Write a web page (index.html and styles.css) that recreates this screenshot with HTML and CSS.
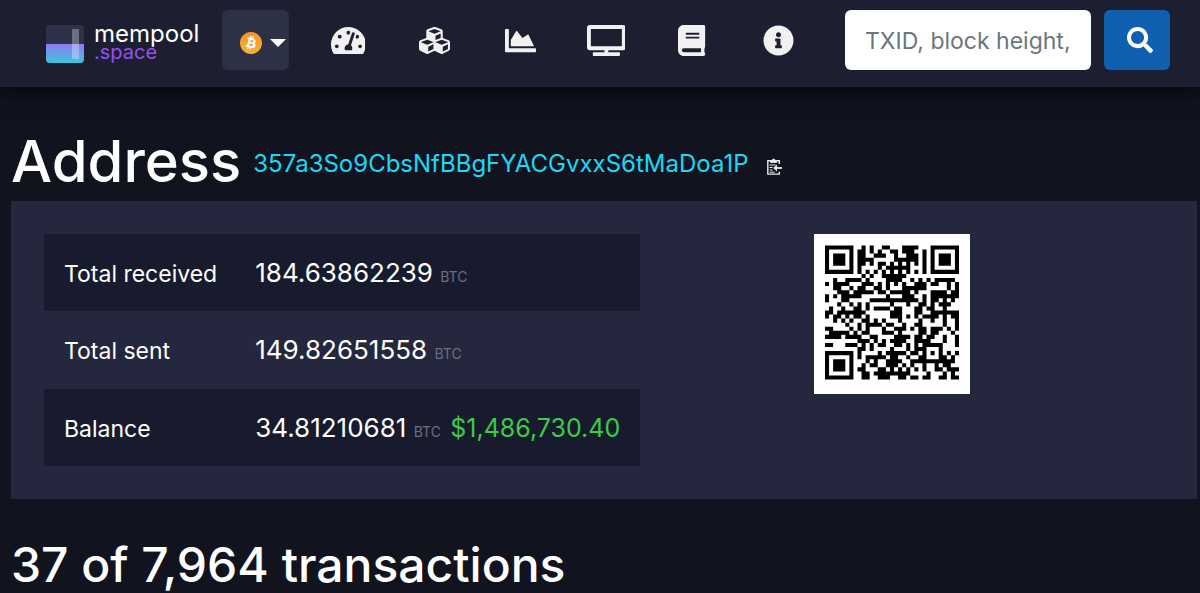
FILE: index.html
```html
<!DOCTYPE html>
<html lang="en">
<head>
<meta charset="utf-8">
<meta name="viewport" content="width=device-width, initial-scale=1">
<title>mempool.space - Address</title>
<link rel="stylesheet" href="styles.css">
</head>
<body>
<header class="topbar">
  <a class="brand" href="#" aria-label="mempool.space">
    <svg class="brand-mark" viewBox="0 0 38 38" aria-hidden="true">
      <defs>
        <linearGradient id="fill" x1="0" y1="0" x2="0" y2="1"><stop offset="0" stop-color="#8d7cf4"/><stop offset="1" stop-color="#3fc4dc"/></linearGradient>
        <clipPath id="round"><rect width="38" height="38" rx="4"/></clipPath>
      </defs>
      <g clip-path="url(#round)">
        <rect width="38" height="38" fill="#2e3249"/>
        <rect y="19" width="38" height="19" fill="url(#fill)"/>
        <rect x="26" y="4" width="7" height="30" rx="1" fill="#fff" opacity=".3"/>
      </g>
    </svg>
    <span class="brand-text"><span class="brand-name">mempool</span><span class="brand-suffix">.space</span></span>
  </a>
  <button class="network" type="button" aria-label="Network">
    <svg class="coin" viewBox="8 8 496 496" aria-hidden="true"><defs><linearGradient id="gold" x1="0" y1="0" x2="0" y2="1"><stop offset="0" stop-color="#f7932a"/><stop offset="1" stop-color="#f9b233"/></linearGradient></defs><circle cx="256" cy="256" r="230" fill="#fff"/><path fill="url(#gold)" d="M504 256c0 136.967-111.033 248-248 248S8 392.967 8 256 119.033 8 256 8s248 111.033 248 248zm-141.651-35.33c4.937-32.999-20.191-50.739-54.55-62.573l11.146-44.702-27.213-6.781-10.851 43.524c-7.154-1.783-14.502-3.464-21.803-5.13l10.929-43.81-27.198-6.781-11.153 44.686c-5.922-1.349-11.735-2.682-17.377-4.084l.031-.14-37.53-9.37-7.239 29.062s20.191 4.627 19.765 4.913c11.022 2.751 13.014 10.044 12.68 15.825l-12.696 50.925c.76.194 1.744.473 2.829.907-.907-.225-1.876-.473-2.876-.713l-17.796 71.338c-1.349 3.348-4.767 8.37-12.471 6.464.271.395-19.78-4.937-19.78-4.937l-13.51 31.147 35.414 8.827c6.588 1.651 13.045 3.379 19.4 5.006l-11.262 45.213 27.182 6.781 11.153-44.733a1038.209 1038.209 0 0 0 21.687 5.627l-11.115 44.523 27.213 6.781 11.262-45.128c46.404 8.781 81.299 5.239 95.986-36.727 11.834-33.79-.589-53.281-25.004-65.991 17.78-4.098 31.174-15.792 34.747-39.949zm-62.177 87.179c-8.41 33.79-65.308 15.523-83.755 10.943l14.944-59.899c18.446 4.603 77.6 13.717 68.811 48.956zm8.417-87.667c-7.673 30.736-55.031 15.12-70.393 11.292l13.548-54.327c15.363 3.828 64.836 10.973 56.845 43.035z"/></svg>
    <span class="caret"></span>
  </button>
  <nav class="nav" aria-label="Main">
    <a href="#" aria-label="Dashboard"><svg viewBox="0 0 576 512"><path d="M288 32C128.94 32 0 160.94 0 320c0 52.8 14.25 102.26 39.06 144.8 5.61 9.62 16.3 15.2 27.44 15.2h443c11.14 0 21.83-5.58 27.44-15.2C561.75 422.26 576 372.8 576 320c0-159.06-128.94-288-288-288zm0 64c14.71 0 26.58 10.13 30.32 23.65-1.11 2.26-2.64 4.23-3.45 6.67l-9.22 27.67c-5.13 3.49-10.97 6.01-17.64 6.01-17.67 0-32-14.33-32-32S270.33 96 288 96zM96 384c-17.67 0-32-14.33-32-32s14.33-32 32-32 32 14.33 32 32-14.33 32-32 32zm48-160c-17.67 0-32-14.33-32-32s14.33-32 32-32 32 14.33 32 32-14.33 32-32 32zm246.77-72.41l-61.33 184C343.13 347.33 352 364.54 352 384c0 11.72-3.38 22.55-8.88 32H232.88c-5.5-9.45-8.88-20.28-8.88-32 0-33.94 26.5-61.43 59.9-63.59l61.34-184.01c4.17-12.56 17.73-19.45 30.36-15.17 12.57 4.19 19.35 17.79 15.17 30.36zm14.66 57.2l15.52-46.55c3.47-1.29 7.13-2.23 11.05-2.23 17.67 0 32 14.33 32 32s-14.33 32-32 32c-11.38-.01-20.89-6.28-26.57-15.22zM480 384c-17.67 0-32-14.33-32-32s14.33-32 32-32 32 14.33 32 32-14.33 32-32 32z"/></svg></a>
    <a href="#" aria-label="Blocks"><svg viewBox="0 0 512 512"><path d="M488.6 250.2L392 214V105.5c0-15-9.3-28.4-23.4-33.7l-100-37.5c-8.1-3.1-17.1-3.1-25.3 0l-100 37.5c-14.1 5.3-23.4 18.7-23.4 33.7V214l-96.6 36.2C9.3 255.5 0 268.9 0 283.9V394c0 13.6 7.7 26.1 19.9 32.2l100 50c10.1 5.1 22.1 5.1 32.2 0l103.9-52 103.9 52c10.1 5.1 22.1 5.1 32.2 0l100-50c12.2-6.1 19.9-18.6 19.9-32.2V283.9c0-15-9.3-28.4-23.4-33.7zM358 214.8l-85 31.9v-68.2l85-37v73.3zM154 104.1l102-38.2 102 38.2v.6l-102 41.4-102-41.4v-.6zm84 291.1l-85 42.5v-79.1l85-38.8v75.4zm0-112l-102 41.4-102-41.4v-.6l102-38.2 102 38.2v.6zm240 112l-85 42.5v-79.1l85-38.8v75.4zm0-112l-102 41.4-102-41.4v-.6l102-38.2 102 38.2v.6z"/></svg></a>
    <a href="#" aria-label="Graphs"><svg viewBox="0 0 512 512"><path d="M500 384c6.6 0 12 5.4 12 12v40c0 6.6-5.4 12-12 12H12c-6.6 0-12-5.4-12-12V76c0-6.6 5.4-12 12-12h40c6.6 0 12 5.4 12 12v308h436zM372.7 159.5L288 216l-85.3-113.7c-5.1-6.8-15.5-6.3-19.9 1L96 248v104h384l-89.9-187.8c-3.2-6.5-11.4-8.7-17.4-4.7z"/></svg></a>
    <a href="#" aria-label="TV view"><svg viewBox="0 0 640 512"><path d="M592 0H48A48 48 0 0 0 0 48v320a48 48 0 0 0 48 48h240v32H112a16 16 0 0 0-16 16v32a16 16 0 0 0 16 16h416a16 16 0 0 0 16-16v-32a16 16 0 0 0-16-16H352v-32h240a48 48 0 0 0 48-48V48a48 48 0 0 0-48-48zm-16 352H64V64h512z"/></svg></a>
    <a href="#" aria-label="Docs"><svg viewBox="0 0 448 512"><path d="M448 360V24c0-13.3-10.7-24-24-24H96C43 0 0 43 0 96v320c0 53 43 96 96 96h328c13.3 0 24-10.7 24-24v-16c0-7.5-3.5-14.3-8.9-18.7-4.2-15.4-4.2-59.3 0-74.7 5.4-4.3 8.9-11.1 8.9-18.6zM128 134c0-3.3 2.7-6 6-6h212c3.3 0 6 2.7 6 6v20c0 3.3-2.7 6-6 6H134c-3.3 0-6-2.7-6-6v-20zm0 64c0-3.3 2.7-6 6-6h212c3.3 0 6 2.7 6 6v20c0 3.3-2.7 6-6 6H134c-3.3 0-6-2.7-6-6v-20zm253.4 250H96c-17.7 0-32-14.3-32-32 0-17.6 14.4-32 32-32h285.4c-1.9 17.1-1.9 46.9 0 64z"/></svg></a>
    <a href="#" aria-label="About"><svg viewBox="0 0 512 512"><path d="M256 8C119.043 8 8 119.083 8 256c0 136.997 111.043 248 248 248s248-111.003 248-248C504 119.083 392.957 8 256 8zm0 110c23.196 0 42 18.804 42 42s-18.804 42-42 42-42-18.804-42-42 18.804-42 42-42zm56 254c0 6.627-5.373 12-12 12h-88c-6.627 0-12-5.373-12-12v-24c0-6.627 5.373-12 12-12h12v-64h-12c-6.627 0-12-5.373-12-12v-24c0-6.627 5.373-12 12-12h64c6.627 0 12 5.373 12 12v100h12c6.627 0 12 5.373 12 12v24z"/></svg></a>
  </nav>
  <form class="search" role="search">
    <input class="search-input" type="text" placeholder="TXID, block height," aria-label="Search">
    <button class="search-button" type="button" aria-label="Search"><svg viewBox="0 0 512 512"><path d="M505 442.7L405.3 343c-4.5-4.5-10.6-7-17-7H372c27.6-35.3 44-79.7 44-128C416 93.1 322.9 0 208 0S0 93.1 0 208s93.1 208 208 208c48.3 0 92.7-16.4 128-44v16.3c0 6.4 2.5 12.5 7 17l99.7 99.7c9.4 9.4 24.6 9.4 33.9 0l28.3-28.3c9.4-9.4 9.4-24.6.1-34zM208 336c-70.7 0-128-57.2-128-128 0-70.7 57.2-128 128-128 70.7 0 128 57.2 128 128 0 70.7-57.2 128-128 128z"/></svg></button>
  </form>
</header>
<main class="page">
  <div class="title">
    <h1>Address</h1>
    <div class="address">
      <a href="#" id="address">357a3So9CbsNfBBgFYACGvxxS6tMaDoa1P</a>
      <button class="copy" type="button" aria-label="Copy address">
        <svg viewBox="0 0 15 17" fill="none" stroke="#e8e8ee" stroke-width="1.4"><path d="M12.3 6V2.7H.8v13.4h11.5v-2.4"/><path d="M3.6 4.4V2.6h1.5a1.5 1.5 0 0 1 3 0h1.5v1.8z" fill="#e8e8ee" stroke-width="1"/><path d="M2.6 7h6M2.6 9.5h3M2.6 12h3M2.6 14.2h5" stroke-width="1"/><path d="M15 10H8" stroke-width="1.8"/><path d="M10 6.6v6.8L6.2 10z" fill="#e8e8ee" stroke="none"/></svg>
      </button>
    </div>
  </div>
  <section class="box">
    <table class="totals">
      <tbody>
        <tr><th scope="row">Total received</th><td>184.63862239 <span class="unit">BTC</span></td></tr>
        <tr><th scope="row">Total sent</th><td>149.82651558 <span class="unit">BTC</span></td></tr>
        <tr><th scope="row">Balance</th><td>34.81210681 <span class="unit">BTC</span> <span class="fiat">$1,486,730.40</span></td></tr>
      </tbody>
    </table>
    <div class="qr-column">
      <div class="qr"><svg id="qr" viewBox="0 0 33 33" role="img" aria-label="Address QR code"></svg></div>
    </div>
  </section>
  <h2>37 of 7,964 transactions</h2>
</main>
<script src="qr.js"></script>
</body>
</html>
```

FILE: styles.css
```css
*, *::before, *::after { box-sizing: border-box; }

body {
  margin: 0;
  background: #11131f;
  color: #fff;
  font-family: Inter, "Liberation Sans", sans-serif;
  font-size: 24px;
  line-height: 36px;
}

a { text-decoration: none; }

.topbar {
  display: flex;
  align-items: flex-start;
  padding: 10px 30px 17px 46px;
  background: #1d1f31;
  box-shadow: 0 0 20px 6px rgba(0, 0, 0, 0.6);
}

.brand {
  display: flex;
  gap: 10px;
  width: 176px;
  padding-top: 15px;
}
.brand-mark { width: 38px; height: 38px; flex: none; }
.brand-text {
  display: flex;
  flex-direction: column;
  font-size: 24px;
  line-height: 18px;
}
.brand-name { color: #fff; }
.brand-suffix { color: #9450f0; font-size: 20px; }

.network {
  display: flex;
  align-items: center;
  gap: 8px;
  width: 67px;
  height: 60px;
  padding: 6px 0 0 18px;
  border: 0;
  border-radius: 6px;
  background: #2d3146;
}
.coin { width: 22px; height: 22px; }
.caret {
  border: 8px solid transparent;
  border-top-color: #fff;
  border-bottom: 0;
}

.nav {
  display: flex;
  flex: 0 1 516px;
  margin-left: 16px;
}
.nav a {
  display: flex;
  flex: 1;
  justify-content: center;
  padding-top: 15px;
}
.nav svg { height: 31px; fill: #f1f1f1; }

.search {
  display: flex;
  gap: 13px;
  margin-left: auto;
}
.search-input {
  width: 246px;
  height: 60px;
  padding: 2px 18px 0 20px;
  border: 0;
  border-radius: 6px;
  background: #fff;
  color: #495057;
  font: inherit;
  font-size: 23px;
}
.search-input::placeholder { color: #6c757d; opacity: 1; }
.search-button {
  display: flex;
  align-items: center;
  justify-content: center;
  width: 66px;
  height: 60px;
  padding: 0 0 0 6px;
  border: 0;
  border-radius: 6px;
  background: #105fb0;
}
.search-button svg { width: 26px; height: 26px; fill: #fff; }

.page { padding: 36px 3px 0 11px; }

.title {
  display: flex;
  align-items: center;
  gap: 12px;
}
h1, h2 { margin: 0; font-weight: 500; }
h1 { font-size: 58px; line-height: 76px; }
.address {
  display: flex;
  align-items: center;
  gap: 18px;
  padding-top: 6px;
}
.address a { color: #1bd8f4; }
.copy {
  display: flex;
  padding: 5px 0 0;
  border: 0;
  background: none;
}
.copy svg { width: 15px; height: 17px; }

.box {
  display: flex;
  margin-top: 2px;
  padding: 33px;
  background: #24273e;
}
.totals { border-collapse: collapse; flex: none; height: 232px; }
.totals tr:nth-child(odd) { background: #181b2d; }
.totals th, .totals td { padding: 3px 20px 0; text-align: left; font-weight: 400; white-space: nowrap; }
.totals th { padding-right: 38px; font-size: 23px; }
.totals td { padding-top: 5px; padding-left: 0; font-size: 26px; }
.totals .unit { color: #6c6e7c; font-size: 14px; }
.totals .fiat { margin-left: 2px; color: #3bcc49; font-size: 25px; }

.qr-column {
  display: flex;
  flex: 1;
  align-items: flex-start;
  justify-content: center;
  padding-right: 20px;
}
.qr { padding: 11px 11px 14px; background: #fff; }
.qr svg { display: block; width: 134px; height: 135px; }

h2 { margin-top: 38px; font-size: 48px; line-height: 56px; }
```

FILE: qr.js
```js
// Version 4, level H QR code, mask 1: leading digits in numeric mode, the rest in byte mode.
(function () {
  var SIZE = 33, EC_LEN = 16, BLOCKS = 4, BLOCK_LEN = 9, MASK = 1;
  var text = document.getElementById('address').textContent;

  function mul(a, b) {
    var r = 0;
    for (; b; b >>= 1) {
      if (b & 1) r ^= a;
      a <<= 1;
      if (a & 256) a ^= 0x11d;
    }
    return r;
  }

  var gen = [1], root = 1;
  for (var i = 0; i < EC_LEN; i++) {
    var next = gen.concat(0);
    for (var j = 0; j < gen.length; j++) next[j + 1] ^= mul(gen[j], root);
    gen = next;
    root = mul(root, 2);
  }

  function errorWords(data) {
    var rem = data.concat(new Array(EC_LEN).fill(0));
    for (var i = 0; i < data.length; i++) {
      var f = rem[i];
      for (var j = 0; j < gen.length; j++) rem[i + j] ^= mul(gen[j], f);
    }
    return rem.slice(data.length);
  }

  function toBits(v, n) {
    return v.toString(2).padStart(n, '0');
  }

  var bits = '';
  if (/^\d{3}/.test(text)) {
    bits = '0001' + toBits(3, 10) + toBits(parseInt(text.slice(0, 3), 10), 10);
    text = text.slice(3);
  }
  bits += '0100' + toBits(text.length, 8);
  for (i = 0; i < text.length; i++) bits += toBits(text.charCodeAt(i), 8);
  bits = (bits + '0000').padEnd(Math.ceil(bits.length / 8) * 8, '0');
  var words = bits.match(/.{8}/g).map(function (b) { return parseInt(b, 2); });
  for (i = 0; words.length < BLOCKS * BLOCK_LEN; i++) words.push(i % 2 ? 17 : 236);

  var data = [], ec = [], stream = '';
  for (i = 0; i < BLOCKS; i++) {
    data.push(words.slice(i * BLOCK_LEN, (i + 1) * BLOCK_LEN));
    ec.push(errorWords(data[i]));
  }
  [[data, BLOCK_LEN], [ec, EC_LEN]].forEach(function (part) {
    for (var k = 0; k < part[1]; k++)
      for (var b = 0; b < BLOCKS; b++) stream += toBits(part[0][b][k], 8);
  });

  var m = [];
  for (var r = 0; r < SIZE; r++) m.push(new Array(SIZE).fill(null));

  function finder(r0, c0) {
    for (var r = -1; r < 8; r++)
      for (var c = -1; c < 8; c++) {
        if (!m[r0 + r] || c0 + c < 0 || c0 + c >= SIZE) continue;
        var d = Math.max(Math.abs(r - 3), Math.abs(c - 3));
        m[r0 + r][c0 + c] = d !== 2 && d !== 4 ? 1 : 0;
      }
  }
  finder(0, 0);
  finder(0, SIZE - 7);
  finder(SIZE - 7, 0);
  for (var t = 8; t < SIZE - 8; t++) m[6][t] = m[t][6] = t % 2 ? 0 : 1;
  for (var y = -2; y < 3; y++)
    for (var x = -2; x < 3; x++)
      m[26 + y][26 + x] = Math.max(Math.abs(x), Math.abs(y)) !== 1 ? 1 : 0;

  var fmt = (2 << 3) | MASK, rem = fmt << 10;
  for (var s = 14; s >= 10; s--) if (rem >> s & 1) rem ^= 0x537 << (s - 10);
  fmt = ((fmt << 10) | rem) ^ 0x5412;
  for (var k = 0; k < 15; k++) {
    var bit = fmt >> k & 1;
    m[k < 6 ? k : k < 8 ? k + 1 : SIZE - 15 + k][8] = bit;
    m[8][k < 8 ? SIZE - 1 - k : k < 9 ? 7 : 14 - k] = bit;
  }
  m[SIZE - 8][8] = 1;

  var n = 0, up = true;
  for (var col = SIZE - 1; col > 0; col -= 2) {
    if (col === 6) col--;
    for (var q = 0; q < SIZE; q++) {
      var row = up ? SIZE - 1 - q : q;
      for (var z = 0; z < 2; z++) {
        if (m[row][col - z] !== null) continue;
        var v = stream[n++] === '1' ? 1 : 0;
        m[row][col - z] = v ^ (row % 2 === 0 ? 1 : 0);
      }
    }
    up = !up;
  }

  // Horizontal runs become single rectangles so that neighbours share no seam.
  var d = '';
  m.forEach(function (line, r) {
    line.join('').replace(/1+/g, function (run, c) {
      d += 'M' + c + ' ' + r + 'h' + run.length + 'v1h-' + run.length + 'z';
    });
  });
  var path = document.createElementNS('http://www.w3.org/2000/svg', 'path');
  path.setAttribute('d', d);
  document.getElementById('qr').appendChild(path);
})();
```
